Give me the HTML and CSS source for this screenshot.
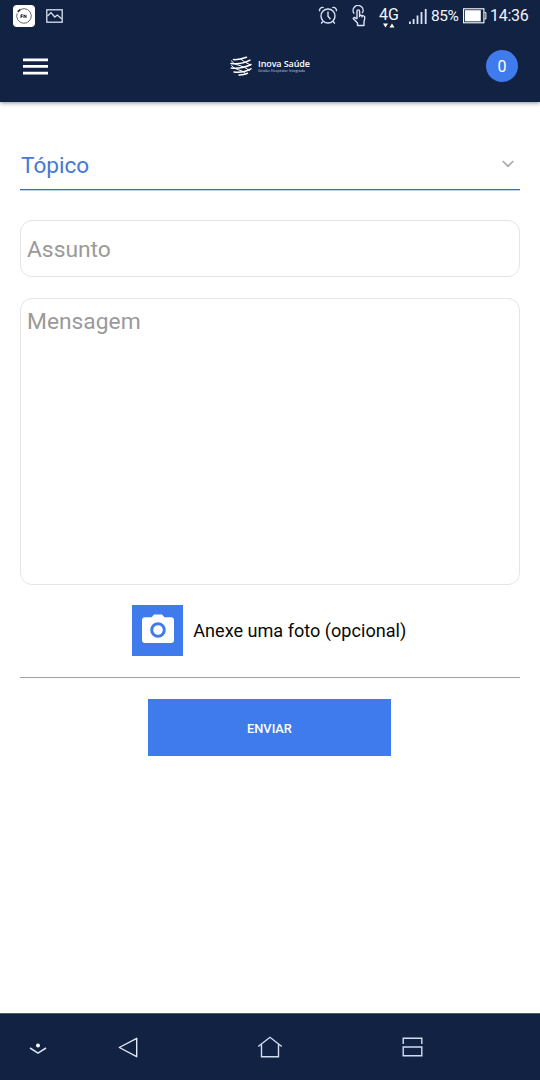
FILE: index.html
```html
<!DOCTYPE html>
<html lang="pt-BR">
<head>
<meta charset="utf-8">
<title>Inova Saúde</title>
<link rel="stylesheet" href="styles.css">
</head>
<body>
<div class="screen">
  <header class="top">
    <div class="status">
      <svg class="app-icon" width="22" height="22" viewBox="0 0 22 22"><rect width="22" height="22" rx="4" fill="#fff"/><path d="M8 4.3A7.3 7.3 0 1 1 4.2 8.3" fill="none" stroke="#555" stroke-width=".9"/><path d="M4.7 6.8L7.5 4.4" stroke="#222" stroke-width="1.6"/><path d="M8 13V9.8h1.8M8 11.3h1.700M11 13V9.800l2 2.800V9.800" fill="none" stroke="#222" stroke-width="1"/></svg>
      <svg class="image-icon" width="17" height="14" viewBox="0 0 17 14" fill="none" stroke="#dce3f5" stroke-width="1.3"><rect x=".8" y=".8" width="15.4" height="12.4"/><path d="M1.5 7L5 3.6L8.8 8L11.3 6L15.6 9.8"/></svg>
      <svg class="alarm-icon" width="20" height="20" viewBox="0 0 20 20" fill="none" stroke="#dce3f5" stroke-width="1.4"><circle cx="10" cy="10" r="7"/><path d="M10 5.500v4.800l2.500 3M4.800 15.500l-1.600 2M15.200 15.500l1.600 2M1.600 5.300A3 3 0 0 1 5.700 1.700M14.300 1.700a3 3 0 0 1 4.100 3.600"/></svg>
      <svg class="touch-icon" width="16" height="22" viewBox="0 0 16 22" fill="none" stroke="#dce3f5" stroke-width="1.4" stroke-linejoin="round"><path d="M3.200 8.600A5 5 0 1 1 11.200 8.200"/><path d="M6 14V6.200a1.300 1.300 0 0 1 2.600 0V10l4 .9q1.400.4 1.200 1.900l-.8 4.400v3.300H6.500v-2.600L2.200 13.600q.6-1.600 2-.9L6 14M8.600 10v2.200M11 10.600v2"/></svg>
      <div class="network"><span>4G</span><svg width="12" height="5" viewBox="0 0 12 5" fill="#fff"><path d="M0 .5h5L2.500 4.500zM6.500 4.500h5L9 .5z"/></svg></div>
      <svg class="signal-icon" width="18" height="16" viewBox="0 0 18 16" fill="#dce3f5"><path d="M0 13.500h1.800V16H0zM3.700 11h1.800v5H3.700zM7.600 7.500h1.800V16H7.600zM11.600 4h1.800v12h-1.800zM15.800 1h1.800v15h-1.800z"/></svg>
      <span class="battery-text">85%</span>
      <svg class="battery-icon" width="24" height="16" viewBox="0 0 24 16"><rect x=".6" y=".8" width="20.300" height="14" fill="none" stroke="#fff" stroke-width="1.1"/><path d="M2 2.200h15.800v11.200H2z" fill="#fff"/><path d="M21.500 4.500h1.400v6.500h-1.400" fill="none" stroke="#fff"/></svg>
      <span class="clock">14:36</span>
    </div>
    <div class="appbar">
      <svg width="25" height="17" viewBox="0 0 25 17" fill="#fff"><path d="M0 .5h25v2.700H0zM0 7.100h25v2.700H0zM0 13.700h25v2.700H0z"/></svg>
      <div class="brand">
        <svg width="22" height="20" viewBox="0 0 22 20" fill="none" stroke="#fff" stroke-width="1.500" stroke-linecap="round"><path d="M3.500 3.600Q9 4 16.500 1.200M1 7.500Q11 9 20 4.200M1.300 12Q12 13 21 8.500M4 16Q13 17.200 21 12.800M9 19Q13.500 19.200 17.500 17.300"/><path d="M1.500 4.800Q3 8 9 9.300T19.500 14.500M1.500 9.500Q3 12.500 8.500 13.800T16 18M11 3.300Q13 5.500 20.500 9" stroke-width="1"/></svg>
        <div class="brand-text"><strong>Inova Saúde</strong><small>Gestão Hospitalar Integrada</small></div>
      </div>
      <span class="badge">0</span>
    </div>
  </header>
  <main class="form">
    <div class="select"><span>Tópico</span><svg width="12" height="8" viewBox="0 0 12 8" fill="none" stroke="#aaa" stroke-width="1.700"><path d="M.7 1L6 6.200L11.300 1"/></svg></div>
    <div class="field subject">Assunto</div>
    <div class="field message">Mensagem</div>
    <div class="attach">
      <span class="camera"><svg width="32" height="30" viewBox="0 0 32 30"><path d="M3 3.300h6.600L12 .4h8l2.400 2.900H29a3 3 0 0 1 3 3v19.600a3 3 0 0 1-3 3H3a3 3 0 0 1-3-3V6.300a3 3 0 0 1 3-3z" fill="#fff"/><circle cx="16" cy="16" r="6.300" fill="#fff" stroke="#3f7bec" stroke-width="3"/></svg></span>
      <span>Anexe uma foto (opcional)</span>
    </div>
    <div class="send">ENVIAR</div>
  </main>
  <nav class="navbar">
    <svg class="nav-hide" width="18" height="12" viewBox="0 0 18 12"><circle cx="9" cy="2.400" r="2" fill="#fff"/><path d="M1 5l8 5.200L17 5" fill="none" stroke="#dce3f5" stroke-width="1.500"/></svg>
    <svg class="nav-back" width="21" height="21" viewBox="0 0 21 21" fill="none" stroke="#e4e9f7" stroke-width="1.400" stroke-linejoin="round"><path d="M1.300 10.500L18.700 1.300v18.400z"/></svg>
    <svg class="nav-home" width="26" height="22" viewBox="0 0 26 22" fill="none" stroke="#d3dcf3" stroke-width="1.400"><path d="M1.200 10.500L13 1.300l11.800 9.200M4.500 8.500v12.300h17V8.500"/></svg>
    <svg class="nav-recent" width="21" height="20" viewBox="0 0 21 20" fill="none" stroke="#d3dcf3" stroke-width="1.400"><path d="M1.200 7V1.200h18.600V7M1.200 10h18.600v8.700H1.200z"/></svg>
  </nav>
</div>
</body>
</html>
```
FILE: styles.css
```css
* { box-sizing: border-box; }
body { margin: 0; font-family: Roboto, sans-serif; background: #fff; }
svg { display: block; flex: none; }
.screen { width: 540px; height: 1080px; display: flex; flex-direction: column; }
.top { height: 102px; background: #122243; color: #fff; box-shadow: 0 1px 4px rgba(18, 34, 67, .5); }
.status { height: 31px; padding: 0 12px 0 13px; display: flex; align-items: center; font-size: 16px; color: #f2f5fc; white-space: nowrap; }
.image-icon { margin-left: 11px; }
.alarm-icon { margin-left: auto; }
.touch-icon { margin-left: 13px; }
.network { width: 20px; height: 21px; margin: 4px 0 0 12px; display: flex; flex-direction: column; align-items: center; font-size: 16px; line-height: 16px; }
.signal-icon { margin: 0 4px 0 10px; }
.battery-text { width: 28px; font-size: 15.5px; letter-spacing: -.4px; }
.battery-icon { margin-left: 4px; }
.clock { width: 38px; margin-left: 3px; font-size: 16px; letter-spacing: -.3px; }
.appbar { height: 70px; padding: 0 22px 0 23px; display: flex; align-items: center; }
.brand { width: 82px; margin-left: 182px; display: flex; align-items: center; gap: 6px; white-space: nowrap; }
.brand-text { display: flex; flex-direction: column; font-family: "Open Sans", sans-serif; }
.brand-text strong { font-size: 9px; line-height: 10px; font-weight: 600; letter-spacing: -.1px; }
.brand-text small { font-size: 3.6px; line-height: 4px; color: #c3cee6; }
.badge { width: 32px; height: 32px; margin-left: auto; border-radius: 50%; background: #3f7bec; font-size: 16px; line-height: 33px; text-align: center; }
.form { flex: 1; padding: 38px 20px 0; }
.select { height: 50px; padding: 1px 6px 0 1px; border-bottom: 1px solid #44699c; display: flex; align-items: center; justify-content: space-between; color: #4479d4; font-size: 22.6px; box-shadow: 0 1px 0 #bed5eb; }
.select svg { margin-bottom: 3px; }
.field { border: 1px solid #e5e5e5; border-radius: 12px; padding-left: 6px; color: #9a9a9a; font-size: 22.8px; }
.subject { height: 57px; margin-top: 30px; line-height: 57px; }
.message { height: 287px; margin-top: 20.5px; padding-top: 9px; line-height: 27px; }
.attach { height: 93.5px; padding-right: 1.5px; display: flex; align-items: center; justify-content: center; gap: 10px; border-bottom: 1px solid #a0a0a0; font-size: 18.1px; color: #080808; }
.camera { width: 51px; height: 51px; background: #3f7bec; display: flex; justify-content: center; padding-top: 9px; }
.send { width: 243px; height: 57.5px; margin: 20.5px 0 0 128px; background: #3f7bec; color: #fff; font-size: 12.8px; font-weight: 500; text-align: center; line-height: 59px; }
.navbar { height: 67px; padding: 0 0 0 29px; background: #122243; border-top: 1px solid #4d5c70; display: flex; align-items: center; }
.nav-hide { margin-top: 3px; }
.nav-back { margin-left: 71px; }
.nav-home { margin: 0 0 1px 118px; }
.nav-recent { margin: 0 0 1px 119px; }
```
